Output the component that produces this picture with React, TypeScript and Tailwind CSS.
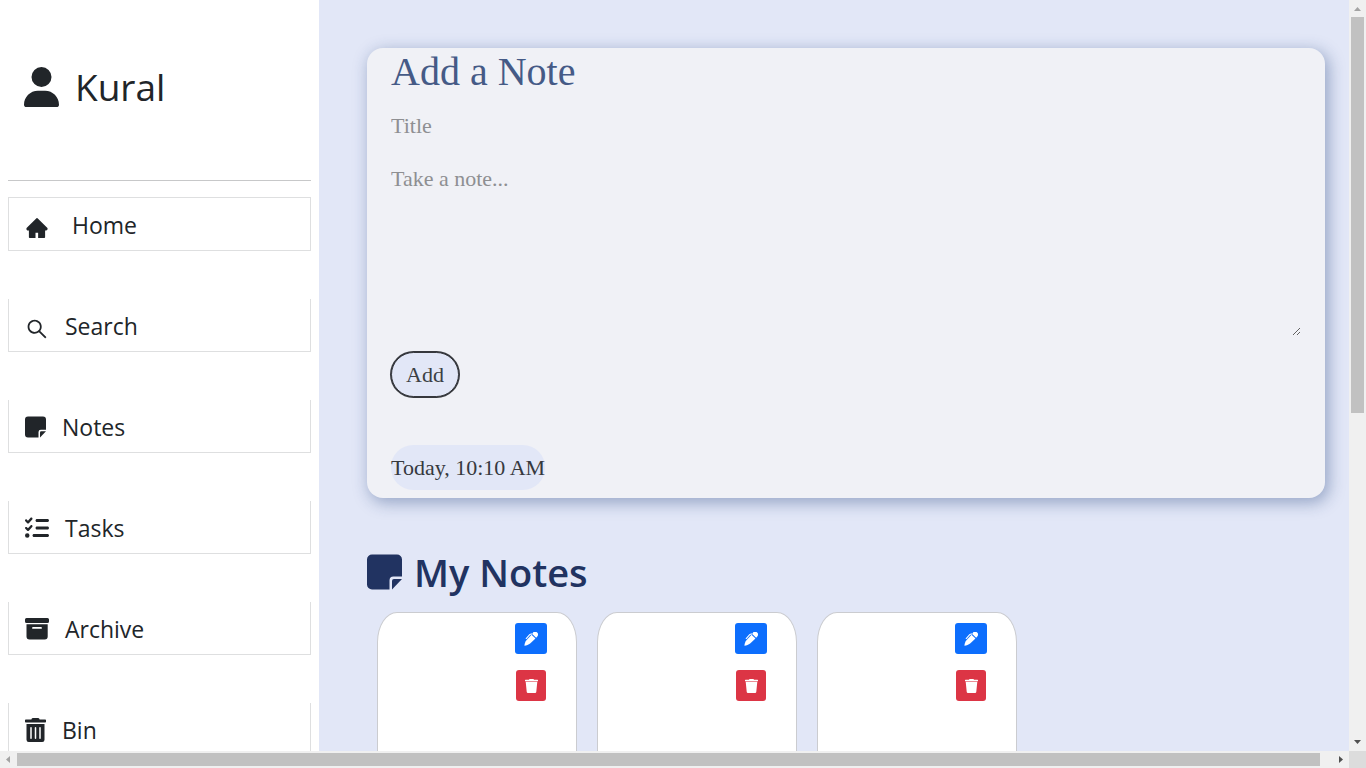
import React from "react";
import { AiFillHome, AiOutlineSearch } from "react-icons/ai";
import { FaTrashAlt } from "react-icons/fa";
import { FaUser, FaListCheck } from "react-icons/fa6";

type IconProps = { className?: string };

function NoteIcon({ className }: IconProps) {
  return (
    <svg viewBox="0 0 35 36" fill="currentColor" className={className} aria-hidden="true">
      <path d="M5 0.500h25a5 5 0 0 1 5 5V22.500h-8.500a4 4 0 0 0-4 4V35.500H5a5 5 0 0 1-5-5v-25a5 5 0 0 1 5-5z" />
      <path d="M25 35.500V27a2 2 0 0 1 2-2h8z" />
    </svg>
  );
}

function ArchiveIcon({ className }: IconProps) {
  return (
    <svg viewBox="0 0 24 22" fill="currentColor" className={className} aria-hidden="true">
      <path d="M1.500 0h21A1.500 1.500 0 0 1 24 1.500v2A1.500 1.500 0 0 1 22.500 5h-21A1.500 1.500 0 0 1 0 3.500v-2A1.500 1.500 0 0 1 1.500 0z" />
      <path fillRule="evenodd" d="M1.500 6.200h21.200V18.500a3 3 0 0 1-3 3H4.500a3 3 0 0 1-3-3zM8 9a.9.900 0 0 0 0 1.800h8A.9.900 0 0 0 16 9z" />
    </svg>
  );
}

function PenIcon({ className }: IconProps) {
  return (
    <svg viewBox="0 0 16 16" fill="currentColor" className={className} aria-hidden="true">
      <path d="M10.200.800a3.200 3.200 0 0 1 5 4.200l-1.300 1.700-4.500-4.400z" />
      <path d="M8.600 3l4.500 4.500L7 13.200c-1.800 1.500-4 2.300-6.500 2.600C.5 13 1.500 10.800 3 9z" />
      <path d="M2.500 7.500 6.500 3q1-1 2.500-.7" fill="none" stroke="currentColor" strokeWidth="1.200" strokeLinecap="round" />
    </svg>
  );
}

function TrashIcon({ className }: IconProps) {
  return (
    <svg viewBox="0 0 13 14" fill="currentColor" className={className} aria-hidden="true">
      <path d="M4.500 0h4l.5.800h3.500a.5.500 0 0 1 .5.500v.9H0v-.9a.5.500 0 0 1 .5-.5H4z" />
      <path d="M.7 2.800h11.600L11.300 12.700a1.300 1.300 0 0 1-1.300 1.300H3a1.300 1.300 0 0 1-1.300-1.300z" />
    </svg>
  );
}

const menu = [
  { label: "Home", icon: AiFillHome, size: "mt-1.5 size-6", gap: "gap-[23px]", border: "border" },
  { label: "Search", icon: AiOutlineSearch, size: "mt-1.5 size-6", gap: "gap-4", border: "border border-t-0" },
  { label: "Notes", icon: NoteIcon, size: "h-[22px] w-[21px]", gap: "gap-4", border: "border border-t-0" },
  { label: "Tasks", icon: FaListCheck, size: "size-6", gap: "gap-4", border: "border border-t-0" },
  { label: "Archive", icon: ArchiveIcon, size: "h-[22px] w-6", gap: "gap-4", border: "border border-t-0" },
  { label: "Bin", icon: FaTrashAlt, size: "h-6 w-[21px]", gap: "gap-4", border: "border border-t-0" },
];

function Sidebar() {
  return (
    <aside className="w-[319px] shrink-0 overflow-hidden bg-white px-2 text-[#212529]">
      <div className="flex h-[181px] items-center gap-4 border-b border-[#c7c8c9] px-4 pb-1.5">
        <FaUser className="h-10 w-[35px]" />
        <h1 className="text-[37px] leading-12">Kural</h1>
      </div>
      <nav className="mt-4 flex flex-col gap-12">
        {menu.map(({ label, icon: Icon, size, gap, border }) => (
          <a
            key={label}
            href="#"
            className={`flex shrink-0 items-center border-[#dedfe0] px-4 pt-[9px] pb-[7px] text-[23px] leading-9 ${gap} ${border}`}
          >
            <Icon className={size} />
            {label}
          </a>
        ))}
      </nav>
    </aside>
  );
}

function AddNote() {
  return (
    <form className="flex flex-col items-start rounded-2xl bg-[#f0f1f6] px-6 pb-2 font-['Liberation_Serif',serif] text-[22px] shadow-[3px_4px_16px_1px_rgba(30,60,120,0.38)]">
      <h2 className="text-[40px] leading-12 text-[#455a86]">Add a Note</h2>
      <input
        aria-label="Title"
        placeholder="Title"
        className="mt-3 h-9 w-full bg-transparent leading-9 outline-none placeholder:text-[#8e8f92]"
      />
      <textarea
        aria-label="Note"
        placeholder="Take a note..."
        className="mt-[19px] block h-[173px] w-full resize bg-transparent leading-8 outline-none placeholder:text-[#8e8f92]"
      />
      <button
        type="button"
        className="mt-4 h-[45px] rounded-[23px] border border-[#36383d] bg-[#e2e7f7] px-3.5 text-[#3c3f44] ring-1 ring-[#36383d]"
      >
        Add
      </button>
      <p className="mt-12 flex h-[45px] items-center rounded-[22px] bg-[#e2e7f7] text-[#36393e]">
        Today, 10:10 AM
      </p>
    </form>
  );
}

function NoteCard() {
  return (
    <article className="flex h-[300px] w-[200px] flex-col items-end gap-4 rounded-[20px/30px] border border-[#cbccd0] bg-white px-[29px] py-2.5">
      <button type="button" aria-label="Edit" className="flex h-[31px] w-8 items-center justify-center rounded-[3px] bg-[#0d6efd] text-white">
        <PenIcon className="size-3.5" />
      </button>
      <button type="button" aria-label="Delete" className="mr-px flex h-[31px] w-[30px] items-center justify-center rounded-[3px] bg-[#dc3545] text-white">
        <TrashIcon className="h-3.5 w-[13px]" />
      </button>
    </article>
  );
}

function VerticalScrollbar() {
  return (
    <div aria-hidden="true" className="flex w-[17px] shrink-0 flex-col items-center bg-[#f0f0f0]">
      <svg viewBox="0 0 17 17" className="size-[17px] shrink-0" fill="#a3a3a3"><path d="M5 11h7L8.500 7z" /></svg>
      <div className="h-[396px] w-[13px] bg-[#c1c1c1]" />
      <svg viewBox="0 0 17 17" className="mt-auto size-[17px] shrink-0" fill="#505050"><path d="M5 6h7L8.500 10z" /></svg>
    </div>
  );
}

function HorizontalScrollbar() {
  return (
    <div aria-hidden="true" className="flex h-[17px] shrink-0 items-center bg-[#f0f0f0]">
      <svg viewBox="0 0 17 17" className="size-[17px] shrink-0" fill="#a3a3a3"><path d="M10 5v7L6 8.500z" /></svg>
      <div className="mr-3 h-[13px] flex-1 bg-[#c1c1c1]" />
      <svg viewBox="0 0 17 17" className="size-[17px] shrink-0" fill="#505050"><path d="M7 5v7l4-3.500z" /></svg>
      <div className="size-[17px] bg-[#dcdcdc]" />
    </div>
  );
}

export default function App() {
  return (
    <div className="flex h-screen flex-col overflow-hidden bg-[#e2e7f7] font-['Open_Sans','Noto_Sans',sans-serif]">
      <div className="flex min-h-0 flex-1">
        <Sidebar />
        <main className="min-w-0 flex-1 overflow-hidden py-12 pr-6 pl-12">
          <AddNote />
          <h2 className="mt-[50px] flex items-center gap-3 text-[38px] leading-12 font-semibold text-[#213361]">
            <NoteIcon className="h-9 w-[35px]" />
            My Notes
          </h2>
          <div className="mt-4 flex gap-5 px-2.5">
            <NoteCard />
            <NoteCard />
            <NoteCard />
          </div>
        </main>
        <VerticalScrollbar />
      </div>
      <HorizontalScrollbar />
    </div>
  );
}
